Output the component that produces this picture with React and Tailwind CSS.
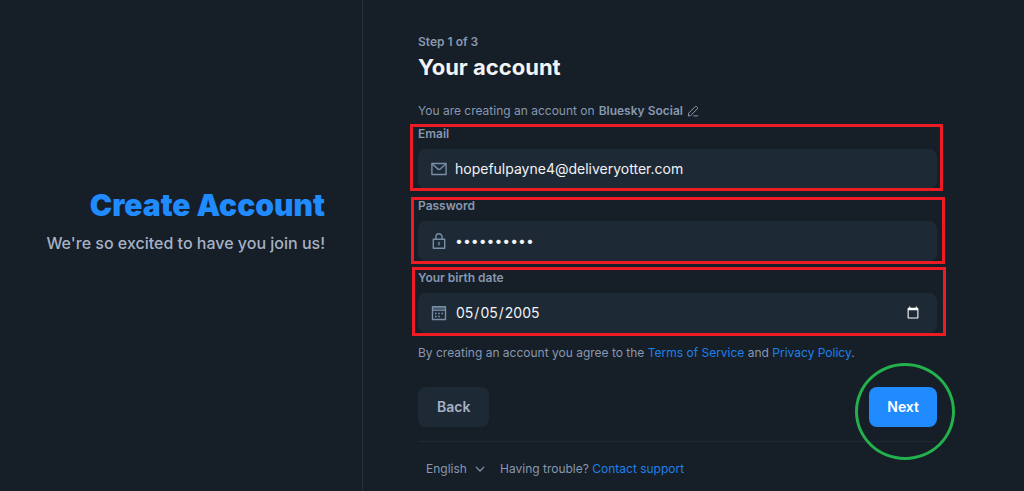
import React from "react";

function EnvelopeIcon() {
  return (
    <svg className="size-4" viewBox="0 0 16 16" fill="none" stroke="currentColor" strokeWidth="1.4" strokeLinejoin="round" aria-hidden="true">
      <path d="M0.9 2.5h14.2v11H0.9z" />
      <path d="M1.2 3l5.6 4.9a1.8 1.8 0 0 0 2.4 0L14.8 3" />
    </svg>
  );
}

function LockIcon() {
  return (
    <svg className="size-4" viewBox="0 0 16 16" fill="none" stroke="currentColor" strokeWidth="1.4" strokeLinejoin="round" strokeLinecap="round" aria-hidden="true">
      <path d="M2.3 6.2h11.4v9H2.3z" />
      <path d="M4.9 6V3.9a3.1 3.1 0 0 1 6.2 0V6" />
      <path d="M8 9.4v2.4" />
    </svg>
  );
}

function CalendarIcon() {
  return (
    <svg className="size-4" viewBox="0 0 16 16" fill="none" stroke="currentColor" strokeWidth="1.4" strokeLinejoin="round" aria-hidden="true">
      <path d="M1.5 1.7h13v12.8h-13z" />
      <path d="M1.5 5.2h13" />
      <g fill="currentColor" stroke="none">
        <path d="M1.5 2h13v2.2h-13z" opacity=".5" />
        <circle cx="8" cy="8.4" r="0.9" />
        <circle cx="11.2" cy="8.4" r="0.9" />
        <circle cx="4.8" cy="8.4" r="0.9" />
        <circle cx="4.8" cy="11.4" r="0.9" />
        <circle cx="8" cy="11.4" r="0.9" />
      </g>
    </svg>
  );
}

function PencilIcon() {
  return (
    <svg className="size-3" viewBox="0 0 12 12" fill="none" stroke="currentColor" strokeWidth="1" strokeLinejoin="round" strokeLinecap="round" aria-hidden="true">
      <path d="M1.4 10.6l.3-2.5 6.5-6.5a1 1 0 0 1 1.4 0l.8.8a1 1 0 0 1 0 1.4L3.9 10.3z" />
      <path d="M6.6 10.9h4.2" />
    </svg>
  );
}

function ChevronDownIcon() {
  return (
    <svg className="pointer-events-none size-3" viewBox="0 0 12 12" fill="none" stroke="currentColor" strokeWidth="1.2" strokeLinecap="round" strokeLinejoin="round" aria-hidden="true">
      <path d="M2.2 4.2L6 8l3.8-3.8" />
    </svg>
  );
}

function Field({ id, label, type, value, icon, outline }) {
  return (
    <div className="relative">
      <label htmlFor={id} className="block text-xs leading-5 font-semibold text-[#8798b0]">
        {label}
      </label>
      <div className="mt-[5px] flex h-10 items-center gap-2 rounded-lg bg-[#1e2936] pr-[15px] pl-[13px] text-[#788ea5]">
        {icon}
        <input
          id={id}
          type={type}
          defaultValue={value}
          className="min-w-0 flex-1 bg-transparent text-sm text-[#f1f3f5] scheme-dark outline-none"
        />
      </div>
      <div className={`pointer-events-none absolute border-3 border-[#ed1c24] ${outline}`} />
    </div>
  );
}

export default function App() {
  return (
    <div className="flex min-h-screen bg-[#161e27] font-['Inter',sans-serif] text-[#8798b0]">
      <aside className="w-[363px] shrink-0 border-r border-[#223040] pt-[185px] pr-[37px] text-right">
        <h1 className="text-[30px] leading-10 font-black text-[#208bfe]">Create Account</h1>
        <p className="mt-2 text-base leading-5 font-medium text-[#a5b2c5]">We're so excited to have you join us!</p>
      </aside>
      <main className="flex-1 pt-8 pr-[87px] pl-[55px]">
        <p className="text-xs leading-5 font-semibold">Step 1 of 3</p>
        <h2 className="text-[22px] leading-[30px] font-bold text-[#f1f3f5]">Your account</h2>
        <p className="mt-[19px] flex items-center gap-1 text-xs leading-5">
          You are creating an account on
          <button type="button" className="flex items-center gap-1 font-semibold">
            Bluesky Social
            <PencilIcon />
          </button>
        </p>
        <form className="mt-[3px]" onSubmit={(e) => e.preventDefault()}>
          <div className="flex flex-col gap-[7px]">
            <Field id="email" label="Email" type="email" value="hopefulpayne4@deliveryotter.com" icon={<EnvelopeIcon />} outline="top-0 -right-[6px] -left-2 -bottom-[2px]" />
            <Field id="password" label="Password" type="password" value="bluesky123" icon={<LockIcon />} outline="top-px -right-2 -left-[7px] -bottom-[3px]" />
            <Field id="birth" label="Your birth date" type="date" value="2005-05-05" icon={<CalendarIcon />} outline="-top-px -right-[9px] -left-[6px] -bottom-[3px]" />
          </div>
          <p className="mt-[10px] text-xs leading-5">
            By creating an account you agree to the{" "}
            <a href="#terms" className="text-[#1d80ea]">Terms of Service</a> and{" "}
            <a href="#privacy" className="text-[#1d80ea]">Privacy Policy</a>.
          </p>
          <div className="mt-6 flex justify-between">
            <button type="button" className="h-10 rounded-lg bg-[#1e2936] px-[19px] text-sm font-semibold text-[#a5b2c5]">
              Back
            </button>
            <div className="relative">
              <button type="submit" className="h-10 rounded-lg bg-[#208bfe] px-[18px] text-sm font-semibold text-white">
                Next
              </button>
              <div className="pointer-events-none absolute -top-6 -right-[18px] -bottom-[33px] -left-[14px] rounded-[50%] border-3 border-[#22b14c]" />
            </div>
          </div>
        </form>
        <footer className="mt-[14px] flex items-center gap-[14px] border-t border-[#1e2936] pt-[17px] pl-2 text-xs leading-5">
          <div className="flex items-center gap-[7px]">
            <select aria-label="Language" className="appearance-none bg-transparent outline-none">
              <option>English</option>
            </select>
            <ChevronDownIcon />
          </div>
          <p>
            Having trouble?{" "}
            <a href="#support" className="text-[#1d80ea]">Contact support</a>
          </p>
        </footer>
      </main>
    </div>
  );
}
